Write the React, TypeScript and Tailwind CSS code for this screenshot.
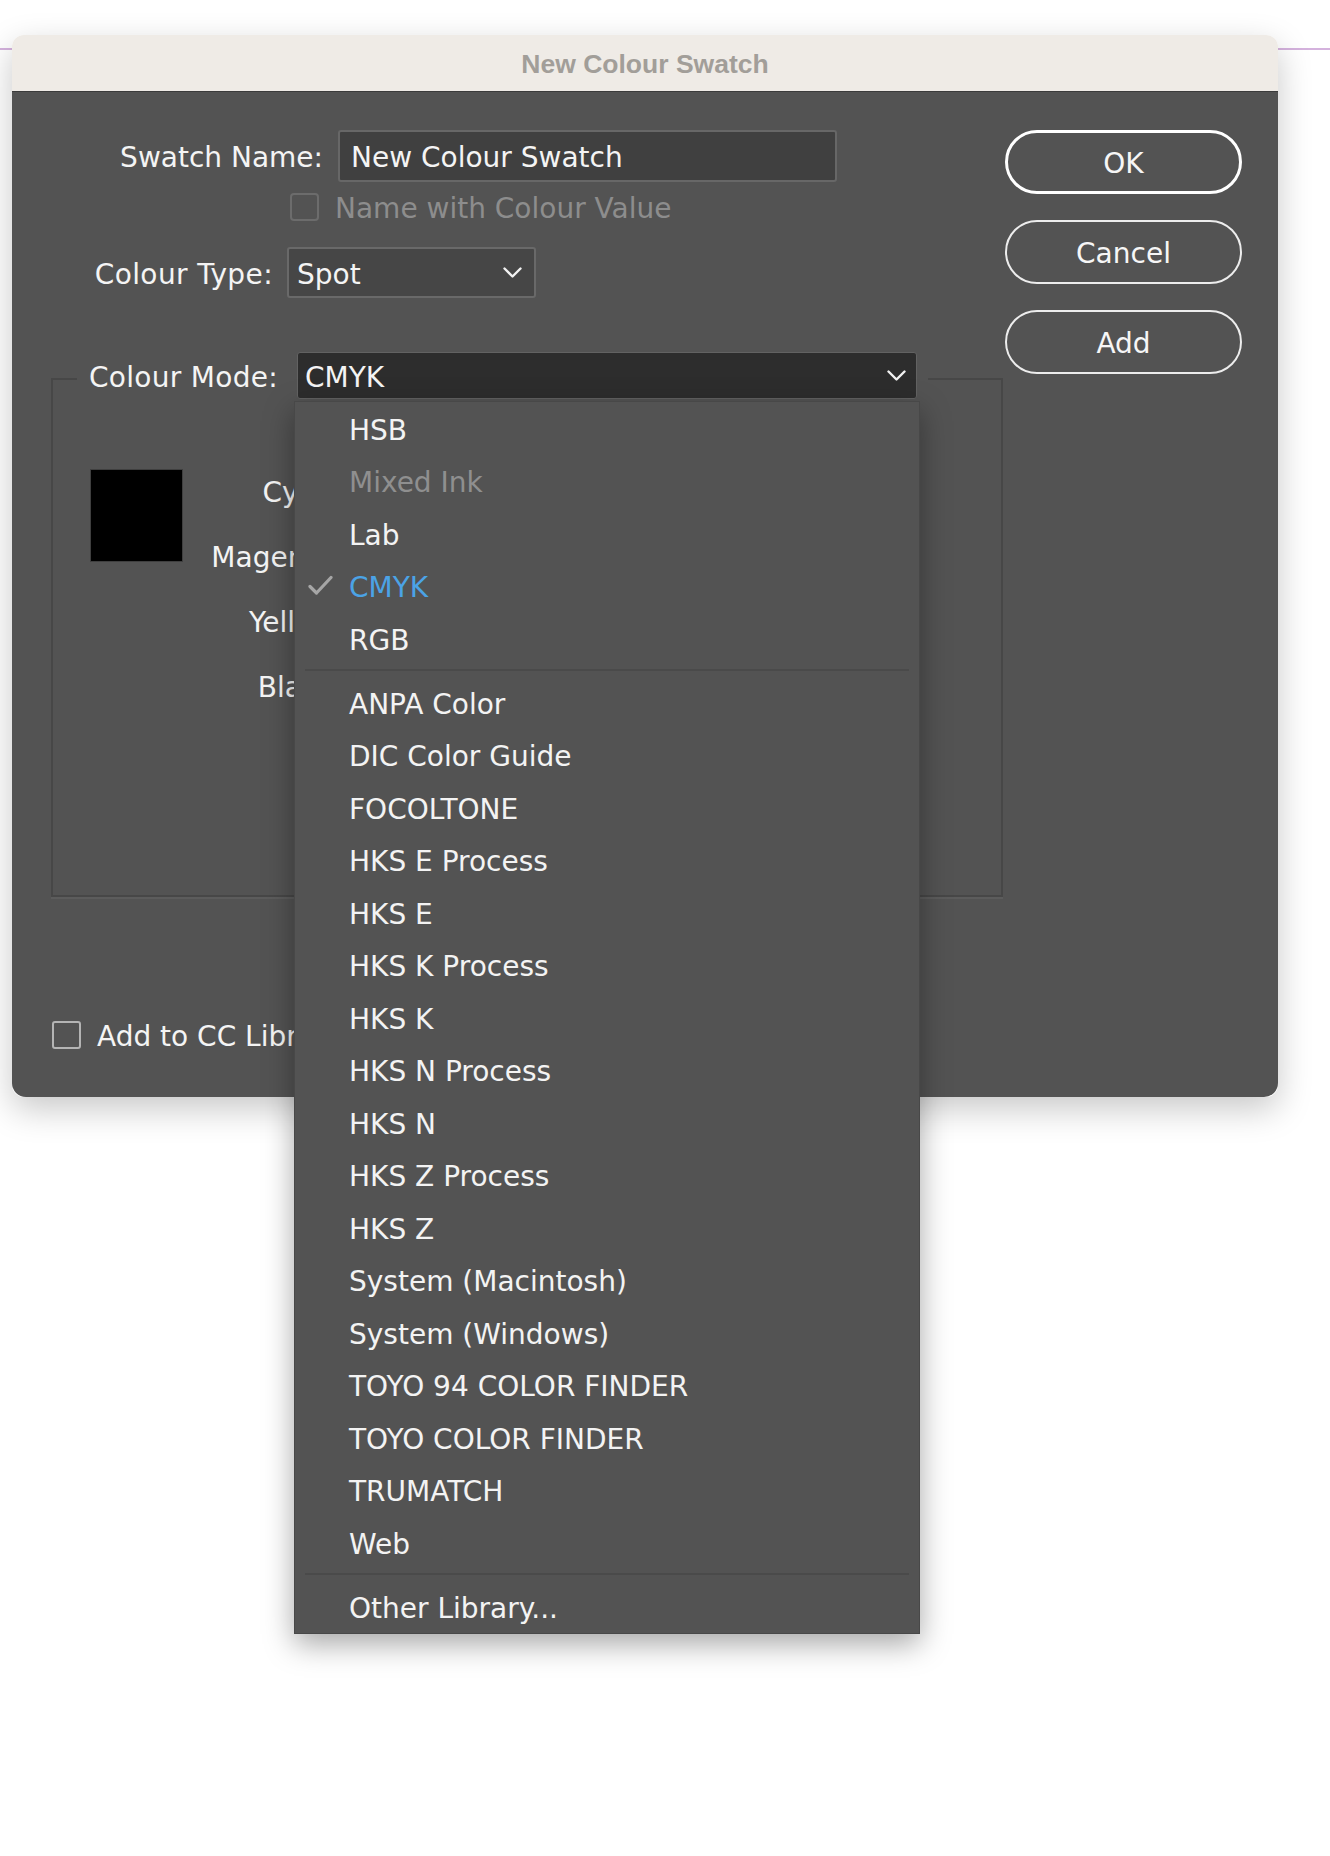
import React from "react";

type MenuEntry =
  | { kind: "item"; label: string; state?: "disabled" | "checked" }
  | { kind: "sep" };

const menu: MenuEntry[] = [
  { kind: "item", label: "HSB" },
  { kind: "item", label: "Mixed Ink", state: "disabled" },
  { kind: "item", label: "Lab" },
  { kind: "item", label: "CMYK", state: "checked" },
  { kind: "item", label: "RGB" },
  { kind: "sep" },
  { kind: "item", label: "ANPA Color" },
  { kind: "item", label: "DIC Color Guide" },
  { kind: "item", label: "FOCOLTONE" },
  { kind: "item", label: "HKS E Process" },
  { kind: "item", label: "HKS E" },
  { kind: "item", label: "HKS K Process" },
  { kind: "item", label: "HKS K" },
  { kind: "item", label: "HKS N Process" },
  { kind: "item", label: "HKS N" },
  { kind: "item", label: "HKS Z Process" },
  { kind: "item", label: "HKS Z" },
  { kind: "item", label: "System (Macintosh)" },
  { kind: "item", label: "System (Windows)" },
  { kind: "item", label: "TOYO 94 COLOR FINDER" },
  { kind: "item", label: "TOYO COLOR FINDER" },
  { kind: "item", label: "TRUMATCH" },
  { kind: "item", label: "Web" },
  { kind: "sep" },
  { kind: "item", label: "Other Library..." },
];

const Chevron = () => (
  <svg width="19" height="12" viewBox="0 0 19 12" fill="none">
    <path
      d="M1.5 1.5 L9.5 9.5 L17.5 1.5"
      stroke="#f2f2f2"
      strokeWidth="2.4"
      strokeLinecap="round"
      strokeLinejoin="round"
    />
  </svg>
);

const Check = () => (
  <svg width="25" height="21" viewBox="0 0 25 21" fill="none">
    <path
      d="M2 11.5 L8.5 18 L23 2.5"
      stroke="#a6a6a6"
      strokeWidth="3.2"
      strokeLinecap="round"
      strokeLinejoin="round"
    />
  </svg>
);

function Menu() {
  return (
    <div className="absolute left-[-3px] top-[49px] z-30 w-[626px] bg-[#535353] border border-[#484848] shadow-[0_10px_28px_rgba(0,0,0,0.35)]">
      {menu.map((m, i) =>
        m.kind === "sep" ? (
          <div key={i} className="h-[11.5px] flex items-center px-[10px]">
            <div className="h-[2px] w-full bg-[#4a4a4a]" />
          </div>
        ) : (
          <div key={i} className="h-[52.5px] flex items-center">
            <div className="w-[54px] pl-[13px] flex items-center">
              {m.state === "checked" ? <Check /> : null}
            </div>
            <span
              className={
                "pt-[5px] text-[28px] leading-none whitespace-nowrap " +
                (m.state === "disabled"
                  ? "text-[#8f8f8f]"
                  : m.state === "checked"
                  ? "text-[#4ba3e6]"
                  : "text-[#f3f3f3]")
              }
            >
              {m.label}
            </span>
          </div>
        )
      )}
    </div>
  );
}

export default function App() {
  return (
    <div className="relative w-[1330px] h-[1856px] bg-white overflow-hidden pt-[35px] pl-[12px] font-['DejaVu_Sans',sans-serif]">
      {/* guide line on the canvas behind the dialog */}
      <div className="absolute left-0 right-0 top-[48px] h-[2px] bg-[#d4b2dd]" />

      <div className="relative z-10 w-[1266px] rounded-[12px] shadow-[0_12px_34px_rgba(0,0,0,0.22)]">
        {/* title bar */}
        <div className="h-[57px] bg-[#efebe6] rounded-t-[12px] border-b border-[#3b3b3b] flex items-center justify-center">
          <span className="pt-[2px] font-['Liberation_Sans',Arial,sans-serif] font-bold text-[26.5px] text-[#a29e99] leading-none">
            New Colour Swatch
          </span>
        </div>

        {/* body */}
        <div className="h-[1005px] bg-[#535353] rounded-b-[14px] flex justify-between">
          {/* left column */}
          <div className="pl-[39px] pt-[38px] flex flex-col">
            {/* swatch name */}
            <div className="flex items-center h-[52px] ml-[60px]">
              <div className="pt-[3px] w-[212px] text-right text-[28px] leading-none text-[#f4f4f4]">
                Swatch Name:
              </div>
              <div className="ml-[15px] w-[499px] h-[52px] rounded-[3px] border-2 border-[#676767] bg-[#404040] flex items-center px-[11px]">
                <span className="pt-[3px] text-[28px] leading-none text-[#f4f4f4]">
                  New Colour Swatch
                </span>
              </div>
            </div>

            {/* name with colour value */}
            <div className="flex items-center h-[28px] ml-[239px] mt-[11px] gap-[16px]">
              <div className="w-[29px] h-[28px] rounded-[4px] border-2 border-[#6c6c6c]" />
              <span className="pt-[4px] text-[28px] leading-none text-[#8d8d8d]">
                Name with Colour Value
              </span>
            </div>

            {/* colour type */}
            <div className="flex items-center h-[51px] ml-[27px] mt-[26px]">
              <div className="pt-[4px] w-[195px] text-right text-[28px] leading-none text-[#f4f4f4] tracking-[0.4px]">
                Colour Type:
              </div>
              <div className="ml-[14px] w-[249px] h-[51px] rounded-[3px] border-2 border-[#696969] bg-[#464646] flex items-center justify-between pl-[8px] pr-[12px]">
                <span className="pt-[4px] text-[28px] leading-none text-[#f4f4f4]">Spot</span>
                <Chevron />
              </div>
            </div>

            {/* colour mode group */}
            <fieldset className="mt-[54px] w-[952px] border-2 border-[#474747] shadow-[0_2px_0_#5c5c5c]">
              <legend className="ml-[24px] pl-[8px] pr-[11px] pb-[7px]">
                <div className="flex items-center h-[47px]">
                  <div className="pt-[4px] w-[193px] text-right text-[28px] leading-none text-[#f4f4f4] tracking-[0.3px]">
                    Colour Mode:
                  </div>
                  <div className="relative ml-[19px] w-[620px] h-[47px]">
                    <div className="w-full h-full rounded-[3px] border border-[#626262] bg-[#2d2d2d] flex items-center justify-between pl-[7px] pr-[10px]">
                      <span className="pt-[4px] text-[28px] leading-none text-[#f4f4f4]">CMYK</span>
                      <Chevron />
                    </div>
                    <Menu />
                  </div>
                </div>
              </legend>

              <div className="h-[489px] flex items-start pl-[37px] pt-[52px]">
                <div className="mt-[11px] w-[93px] h-[93px] bg-black border border-[#3f3f3f]" />
                <div className="w-[160px] flex flex-col">
                  {["Cyan:", "Magenta:", "Yellow:", "Black:"].map((l) => (
                    <div
                      key={l}
                      className="h-[65px] pt-[5px] flex items-center justify-end text-[28px] leading-none text-[#f4f4f4]"
                    >
                      {l}
                    </div>
                  ))}
                </div>
              </div>
            </fieldset>

            {/* add to cc library */}
            <div className="flex items-center h-[28px] mt-[124px] ml-[1px] gap-[16px]">
              <div className="w-[29px] h-[28px] rounded-[3px] border-2 border-[#b4b4b4]" />
              <span className="pt-[3px] text-[28px] leading-none text-[#f4f4f4]">
                Add to CC Library
              </span>
            </div>
          </div>

          {/* buttons */}
          <div className="pr-[36px] pt-[38px] flex flex-col gap-[26px]">
            <div className="w-[237px] h-[64px] pt-[3px] rounded-full border-[3px] border-white flex items-center justify-center text-[28px] leading-none text-[#f6f6f6]">
              OK
            </div>
            <div className="w-[237px] h-[64px] pt-[3px] rounded-full border-2 border-[#ededed] flex items-center justify-center text-[28px] leading-none text-[#f6f6f6]">
              Cancel
            </div>
            <div className="w-[237px] h-[64px] pt-[3px] rounded-full border-2 border-[#ededed] flex items-center justify-center text-[28px] leading-none text-[#f6f6f6]">
              Add
            </div>
          </div>
        </div>
      </div>
    </div>
  );
}
